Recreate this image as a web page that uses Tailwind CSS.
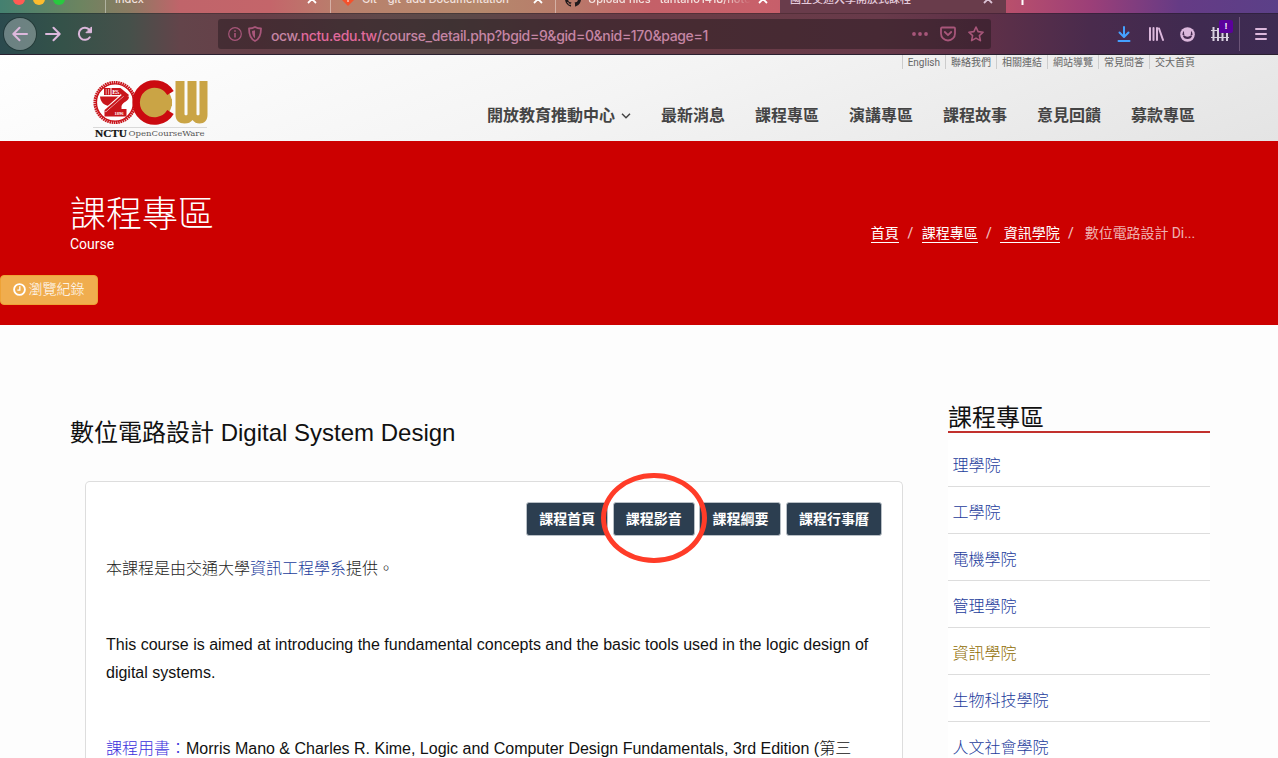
<!DOCTYPE html>
<html lang="zh-Hant">
<head>
<meta charset="utf-8">
<title>國立交通大學開放式課程</title>
<script src="https://cdn.jsdelivr.net/npm/@tailwindcss/browser@4"></script>
</head>
<body class="w-[1278px] h-[758px] overflow-hidden bg-[#fdfdfd] font-['Liberation_Sans','Noto_Sans_CJK_TC',sans-serif] text-[#111]">

<!-- Browser chrome -->
<div class="h-[55px] border-b border-[#2a2030] bg-[linear-gradient(90deg,#448070_0,#6c8460_80px,#8b7a62_130px,#c0646a_180px,#c4656a_270px,#b8806c_340px,#b5886c_480px,#b87a6a_570px,#c46068_650px,#c8606a_760px,#b84f6c_1010px,#9c3f78_1090px,#653b85_1180px,#5b4088_1278px)]">
  <div class="h-[13px] overflow-hidden flex items-end text-[11px] font-medium font-['Inter','Noto_Sans_CJK_TC',sans-serif] text-[#f3e2df]">
    <div class="w-[105px] h-7 flex items-center gap-2 pl-[13px]">
      <span class="size-3 rounded-full bg-[#ff5b54]"></span><span class="size-3 rounded-full bg-[#fcbc2e]"></span><span class="size-3 rounded-full bg-[#28c93f]"></span>
    </div>
    <div class="w-[225px] h-7 flex items-center border-l border-white/40 pl-[9px] pr-[13px]">
      <span class="flex-1">Index</span>
      <svg class="size-[10px]" viewBox="0 0 10 10" fill="none" stroke="#fff" stroke-width="1.8"><path d="M1 1l8 8M9 1L1 9"/></svg>
    </div>
    <div class="w-[225px] h-7 flex items-center border-l border-white/40 pl-[10px] pr-[12px]">
      <svg class="size-[14px] mr-[7px]" viewBox="0 0 14 14"><path d="M7 0l7 7-7 7-7-7z" fill="#f4512c"/><path d="M5 4l2 2v4M7 6l2.500 1.500" stroke="#fff" fill="none"/></svg>
      <span class="flex-1 whitespace-nowrap">Git - git-add Documentation</span>
      <svg class="size-[10px]" viewBox="0 0 10 10" fill="none" stroke="#fff" stroke-width="1.800"><path d="M1 1l8 8M9 1L1 9"/></svg>
    </div>
    <div class="w-[225px] h-7 flex items-center border-l border-white/40 pl-[9px] pr-[12px]">
      <svg class="size-4 mr-[7px]" viewBox="0 0 16 16" fill="#201a1d"><path d="M8 0C3.580 0 0 3.580 0 8c0 3.540 2.290 6.530 5.470 7.590.4.070.55-.17.55-.38v-1.490c-2.010.37-2.530-.49-2.690-.94-.09-.23-.48-.94-.82-1.130-.28-.15-.68-.52-.01-.53.63-.01 1.080.58 1.230.82.72 1.210 1.870.87 2.330.66.070-.52.28-.87.51-1.070-1.780-.2-3.640-.89-3.640-3.950 0-.87.31-1.590.82-2.150-.08-.2-.36-1.020.08-2.120 0 0 .67-.21 2.200.82a7.500 7.500 0 0 1 4 0c1.530-1.040 2.200-.82 2.200-.82.44 1.100.16 1.920.08 2.120.51.56.82 1.270.82 2.150 0 3.070-1.870 3.750-3.650 3.950.29.25.54.73.54 1.480v2.200c0 .21.15.46.55.38A8 8 0 0 0 8 0z"/></svg>
      <span class="flex-1 w-0 overflow-hidden whitespace-nowrap [mask-image:linear-gradient(90deg,#000_82%,transparent)]">Upload files · tantan01418/note</span>
      <svg class="size-[10px] ml-[7px]" viewBox="0 0 10 10" fill="none" stroke="#fff" stroke-width="1.800"><path d="M1 1l8 8M9 1L1 9"/></svg>
    </div>
    <div class="w-[226px] h-7 flex items-center bg-[#693c4b] pl-[10px] pr-[13px]">
      <span class="flex-1 text-[#e5cbdc]">國立交通大學開放式課程</span>
      <svg class="size-[10px]" viewBox="0 0 10 10" fill="none" stroke="#dcc3d5" stroke-width="1.800"><path d="M1 1l8 8M9 1L1 9"/></svg>
    </div>
    <div class="w-8 h-7 flex items-center justify-center">
      <svg class="size-[11px]" viewBox="0 0 11 11" stroke="#fff" stroke-width="2"><path d="M5.500 0v11M0 4h11"/></svg>
    </div>
  </div>

  <div class="h-[41px] flex items-center border-t border-black/20 pl-1 text-[#dcb8dc] bg-[linear-gradient(90deg,#2b4a4e_0,#345249_60px,#46504a_130px,#63444a_180px,#663f48_260px,#60484a_380px,#5a4a48_450px,#673c48_600px,#693c46_700px,#683a4a_880px,#5e3048_990px,#4a2b4d_1090px,#3f2a50_1200px,#3d2b52_1278px)]">
    <span class="size-8 rounded-full bg-white/30 ring-1 ring-black/25 flex items-center justify-center">
      <svg class="size-4" viewBox="0 0 16 16" fill="none" stroke="currentColor" stroke-width="2" stroke-linecap="round" stroke-linejoin="round"><path d="M15 8H1.500M7.500 1.800L1.300 8l6.200 6.200"/></svg>
    </span>
    <svg class="size-4 ml-[9px]" viewBox="0 0 16 16" fill="none" stroke="currentColor" stroke-width="2" stroke-linecap="round" stroke-linejoin="round"><path d="M1 8h13.500M8.500 1.800L14.700 8l-6.200 6.200"/></svg>
    <svg class="size-4 ml-[16px]" viewBox="0 0 16 16" fill="none" stroke="currentColor" stroke-width="2" stroke-linecap="round"><path d="M12.800 11.200A6 6 0 1 1 12.500 4"/><path d="M14.500 1.300v5.400H9.300z" fill="currentColor" stroke-width="1" stroke-linejoin="round"/></svg>
    <div class="ml-[125px] w-[773px] h-[30px] rounded-[3px] bg-[#1e161a]/45 flex items-center pl-[10px] pr-[7px] text-[#a8567a]">
      <svg class="size-[14px]" viewBox="0 0 14 14" fill="none" stroke="currentColor" stroke-width="1.200"><circle cx="7" cy="7" r="6.300"/><path d="M7 6v4.500M7 3.300v1.500" stroke-width="1.600"/></svg>
      <svg class="w-[14px] h-4 ml-[6px]" viewBox="0 0 14 16" fill="none" stroke="currentColor"><path d="M7 1C5 2.200 3 2.500 1 2.500c0 6.500 1.500 10.500 6 12.500 4.500-2 6-6 6-12.500C11 2.500 9 2.200 7 1z" stroke-width="1.800" stroke-linejoin="round"/><path d="M7 4.200v8C4.800 10.500 4 8 4 4.900z" fill="currentColor" stroke="none"/></svg>
      <span class="ml-[9px] mt-[3px] w-[437px] text-[14px] leading-5 tracking-[-0.360px] whitespace-nowrap font-medium font-['Inter',sans-serif] text-[#c585a4]">ocw.<span class="text-[#e06a9c]">nctu.edu.tw</span>/course_detail.php?bgid=9&amp;gid=0&amp;nid=170&amp;page=1</span>
      <svg class="ml-auto w-4 h-4" viewBox="0 0 16 16" fill="currentColor"><circle cx="2" cy="8" r="1.900"/><circle cx="8" cy="8" r="1.900"/><circle cx="14" cy="8" r="1.900"/></svg>
      <svg class="ml-3 w-4 h-4" viewBox="0 0 16 16" fill="none" stroke="currentColor" stroke-width="1.800" stroke-linecap="round" stroke-linejoin="round"><path d="M2 1.500h12a1 1 0 0 1 1 1V7.500a7 7 0 0 1-14 0v-5a1 1 0 0 1 1-1z"/><path d="M4.800 6L8 9.200 11.200 6"/></svg>
      <svg class="ml-3 w-4 h-4" viewBox="0 0 16 16" fill="none" stroke="currentColor" stroke-width="1.600" stroke-linejoin="round"><path d="M8 1l2.100 4.600 5 .6-3.700 3.400 1 5L8 12.100l-4.400 2.500 1-5L.9 6.200l5-.6z"/></svg>
    </div>
    <svg class="ml-[126px] w-[14px] h-4" viewBox="0 0 14 16" fill="none" stroke="#45a1ff" stroke-width="2" stroke-linecap="round" stroke-linejoin="round"><path d="M7 1v9.500M2.500 6.500L7 11l4.500-4.500M1.500 15h11"/></svg>
    <svg class="ml-[17px] w-4 h-4" viewBox="0 0 16 16" fill="none" stroke="currentColor" stroke-width="2" stroke-linecap="round"><path d="M2 2v12M5.500 2v12M9 2v12M11 2.500L15 14"/></svg>
    <svg class="ml-4 w-[15px] h-[15px]" viewBox="0 0 16 16"><circle cx="8" cy="8" r="7.800" fill="currentColor"/><path d="M3 9h10c-.5 2.600-2.500 3.800-5 3.800S3.500 11.600 3 9z" fill="#452b4f"/><path d="M4.300 4a5.400 5.400 0 0 0-1.700 4.500h2.600C4.300 7 4.200 5.500 4.300 4zM11.700 4a5.400 5.400 0 0 1 1.700 4.500h-2.600c.9-1.500 1-3 .9-4.500z" fill="#452b4f"/><ellipse cx="8" cy="7.300" rx="3.400" ry="3.200" fill="currentColor"/></svg>
    <span class="relative ml-4 w-[18px] h-[17px]">
      <svg class="w-[18px] h-4" viewBox="0 0 18 16" fill="none" stroke="#d8cfe0" stroke-width="2"><path d="M2.500 1v14M7 2v13M11.500 2v13M16 2v13" /><path d="M0 4.500h18M0 11.500h18" stroke-width="1.200"/></svg>
      <span class="absolute left-[8px] -top-[6px] w-[14px] h-[13px] rounded-[2px] bg-[#5b009c] text-white text-[9px] leading-[13px] text-center font-bold">!</span>
    </span>
    <span class="ml-[10px] w-px h-[34px] bg-[#6b5478]"></span>
    <svg class="ml-[15px] w-3 h-[14px]" viewBox="0 0 12 14" stroke="currentColor" stroke-width="2" stroke-linecap="round"><path d="M1 2h10M1 7h10M1 12h10"/></svg>
  </div>
</div>

<!-- Site header -->
<header class="h-[86px] flex justify-between pl-[92px] pr-[83px] bg-[linear-gradient(160deg,#ffffff_0%,#f4f4f4_48%,#e4e4e4_100%)]">
  <svg class="mt-[22px] w-[118px] h-[64px]" viewBox="0 0 118 64">
    <circle cx="23" cy="25.500" r="20" fill="#fff" stroke="#c9151b" stroke-width="3.200" stroke-dasharray="1.600 .6"/>
    <circle cx="23" cy="25.500" r="18.600" fill="none" stroke="#c9151b" stroke-width="1.400"/>
    <circle cx="63" cy="25.500" r="17" fill="#caa445"/>
    <path d="M78.500 16A18.500 18.500 0 1 0 78.500 35" fill="none" stroke="#cb0a10" stroke-width="7.500"/>
    <path d="M64 22h16v7H64z" fill="#caa445"/>
    <path d="M12 11h6.500v7H12zM19.500 11h9v7h-9z" fill="#c9151b"/>
    <path d="M14.200 12v5.500M16.500 12v5.500" stroke="#f0b8ba" stroke-width=".8"/>
    <text x="20.200" y="17" font-size="6.500" font-weight="700" fill="#fff" font-family="Liberation Serif" textLength="7.500">ES</text>
    <path d="M8 19.500h29c0 5-6 5-7.500 9.500v3h5v7.500H12.500V32h5v-3C12 28.500 8.500 25 8 19.500z" fill="#c9151b"/>
    <path d="M12.500 34L33 16" stroke="#fff" stroke-width="3.600"/>
    <path d="M13 34L33 16.500" stroke="#c9151b" stroke-width="2"/>
    <path d="M28.500 11l8.500 7-3 3.500-8.500-7z" fill="#c9151b"/>
    <text x="27" y="38" font-size="4.500" font-weight="700" fill="#fff" text-anchor="middle" font-family="Liberation Serif">1896</text>
    <path d="M83.500 4h9v33.500a2 2 0 0 0 3 0V4h9v33.500a2 2 0 0 0 3 0V4h8v34c0 5-3 8.500-8 8.500-3 0-5-1-7-3.500-2 2.500-4 3.500-8 3.500-5.500 0-9-3.500-9-8.500z" fill="#caa445"/>
    <path d="M1 50.500h114" stroke="#d9d9d9"/>
    <text x="3" y="60" font-size="10.500" font-weight="700" fill="#111" font-family="Liberation Serif" textLength="32" lengthAdjust="spacingAndGlyphs" stroke="#111" stroke-width=".2">NCTU</text>
    <text x="36.500" y="59" font-size="8" fill="#555" font-family="DejaVu Serif" textLength="76" lengthAdjust="spacingAndGlyphs">OpenCourseWare</text>
  </svg>
  <div class="flex flex-col items-end">
    <div class="flex text-[10px] leading-[16px] h-[14px] text-[#666] font-['Roboto','Noto_Sans_CJK_TC',sans-serif]">
      <a class="border-l border-[#ccc] px-[5px]">English</a><a class="border-l border-[#ccc] px-[5px]">聯絡我們</a><a class="border-l border-[#ccc] px-[5px]">相關連結</a><a class="border-l border-[#ccc] px-[5px]">網站導覽</a><a class="border-l border-[#ccc] px-[5px]">常見問答</a><a class="border-l border-[#ccc] pl-[5px]">交大首頁</a>
    </div>
    <nav class="mt-[35px] flex gap-[30px] text-base leading-6 font-bold text-[#444]">
      <a class="flex items-center gap-[6px]">開放教育推動中心<svg class="w-[10px] h-[6px]" viewBox="0 0 10 6" fill="none" stroke="#444" stroke-width="1.500"><path d="M1 .800l4 4 4-4"/></svg></a>
      <a>最新消息</a><a>課程專區</a><a>演講專區</a><a>課程故事</a><a>意見回饋</a><a>募款專區</a>
    </nav>
  </div>
</header>

<!-- Title banner -->
<section class="h-[184px] bg-[#cc0000] text-white font-['Roboto','Noto_Sans_CJK_TC',sans-serif]">
  <div class="h-[134px] flex justify-between pl-[70px] pr-[83px]">
    <div class="pt-[52px]">
      <h1 class="text-[36px] leading-[44px] font-light">課程專區</h1>
      <p class="text-[14px] leading-[14px]">Course</p>
    </div>
    <div class="mt-[82px] h-5 flex items-start text-[14px] leading-[21px]">
      <a class="h-5 border-b border-white">首頁</a><span class="w-[23px] text-center text-white/80">/</span>
      <a class="h-5 border-b border-white">課程專區</a><span class="w-[22px] text-center text-white/80">/</span>
      <a class="h-5 border-b border-white pl-1">資訊學院</a><span class="w-[22px] mr-[3px] text-center text-white/80">/</span>
      <span class="text-white/70 tracking-[-0.080px]">數位電路設計 Di...</span>
    </div>
  </div>
  <button class="w-[98px] h-[30px] flex items-center justify-center gap-[3px] rounded border border-[#eea236] bg-[#f0ad4e] text-[14px] font-light leading-5 pr-px pb-[2px]">
    <svg class="size-[13px] mt-px" viewBox="0 0 12 12" fill="none" stroke="#fff" stroke-width="1.700"><circle cx="6" cy="6" r="5"/><path d="M6.300 3v3.500H4" stroke-width="1.200"/></svg>瀏覽紀錄
  </button>
</section>

<!-- Content -->
<main class="flex justify-between h-[433px] overflow-hidden pl-[70px] pr-[68px]">
  <article class="w-[833px] pt-[92px]">
    <h2 class="text-2xl leading-8">數位電路設計 Digital System Design</h2>
    <div class="ml-[15px] mt-[32px] h-[300px] rounded-t-[5px] border border-b-0 border-[#ddd] bg-white px-5 pt-5">
      <div class="relative flex justify-end gap-[4.600px] text-[14px] leading-5 font-bold text-white">
        <a class="h-[34px] px-3 py-[6px] rounded-[3px] border border-[#b9c0c6] bg-[#2c3e50]">課程首頁</a>
        <a class="h-[34px] px-3 py-[6px] rounded-[3px] border border-[#b9c0c6] bg-[#2c3e50]">課程影音</a>
        <a class="h-[34px] px-3 py-[6px] rounded-[3px] border border-[#b9c0c6] bg-[#2c3e50]">課程綱要</a>
        <a class="h-[34px] px-3 py-[6px] rounded-[3px] border border-[#b9c0c6] bg-[#2c3e50]">課程行事曆</a>
        <span class="absolute left-[495px] -top-[29.500px] w-[105.500px] h-[90px] rounded-[50%] border-[5px] border-[#ff3c28]"></span>
      </div>
      <p class="mt-[19px] text-base leading-7 font-light text-[#222]">本課程是由交通大學<a class="text-[#1c3c9c]">資訊工程學系</a>提供。</p>
      <p class="mt-[48px] text-base leading-7 whitespace-nowrap">This course is aimed at introducing the fundamental concepts and the basic tools used in the logic design of<br>digital systems.</p>
      <p class="mt-[48px] text-base leading-7 whitespace-nowrap"><span class="font-light text-[#3b30dc]">課程用書：</span>Morris Mano &amp; Charles R. Kime, Logic and Computer Design Fundamentals, 3rd Edition (<span class="font-light">第三</span></p>
    </div>
  </article>
  <aside class="w-[262px] pt-[76px]">
    <h3 class="h-8 border-b-2 border-[#c1302c] text-2xl leading-[34px]">課程專區</h3>
    <ul class="mt-[7px] text-base font-light text-[#1c3c9c]">
      <li class="h-[47px] pl-[4.500px] pt-[3px] bg-white border-b border-[#ddd] leading-[45px]">理學院</li>
      <li class="h-[47px] pl-[4.500px] pt-[3px] bg-white border-b border-[#ddd] leading-[45px]">工學院</li>
      <li class="h-[47px] pl-[4.500px] pt-[3px] bg-white border-b border-[#ddd] leading-[45px]">電機學院</li>
      <li class="h-[47px] pl-[4.500px] pt-[3px] bg-white border-b border-[#ddd] leading-[45px]">管理學院</li>
      <li class="h-[47px] pl-[4.500px] pt-[3px] bg-white border-b border-[#ddd] leading-[45px] text-[#8f6c00]">資訊學院</li>
      <li class="h-[47px] pl-[4.500px] pt-[3px] bg-white border-b border-[#ddd] leading-[45px]">生物科技學院</li>
      <li class="h-[36px] pl-[4.500px] pt-[3px] bg-white leading-[45px]">人文社會學院</li>
    </ul>
  </aside>
</main>
</body>
</html>
